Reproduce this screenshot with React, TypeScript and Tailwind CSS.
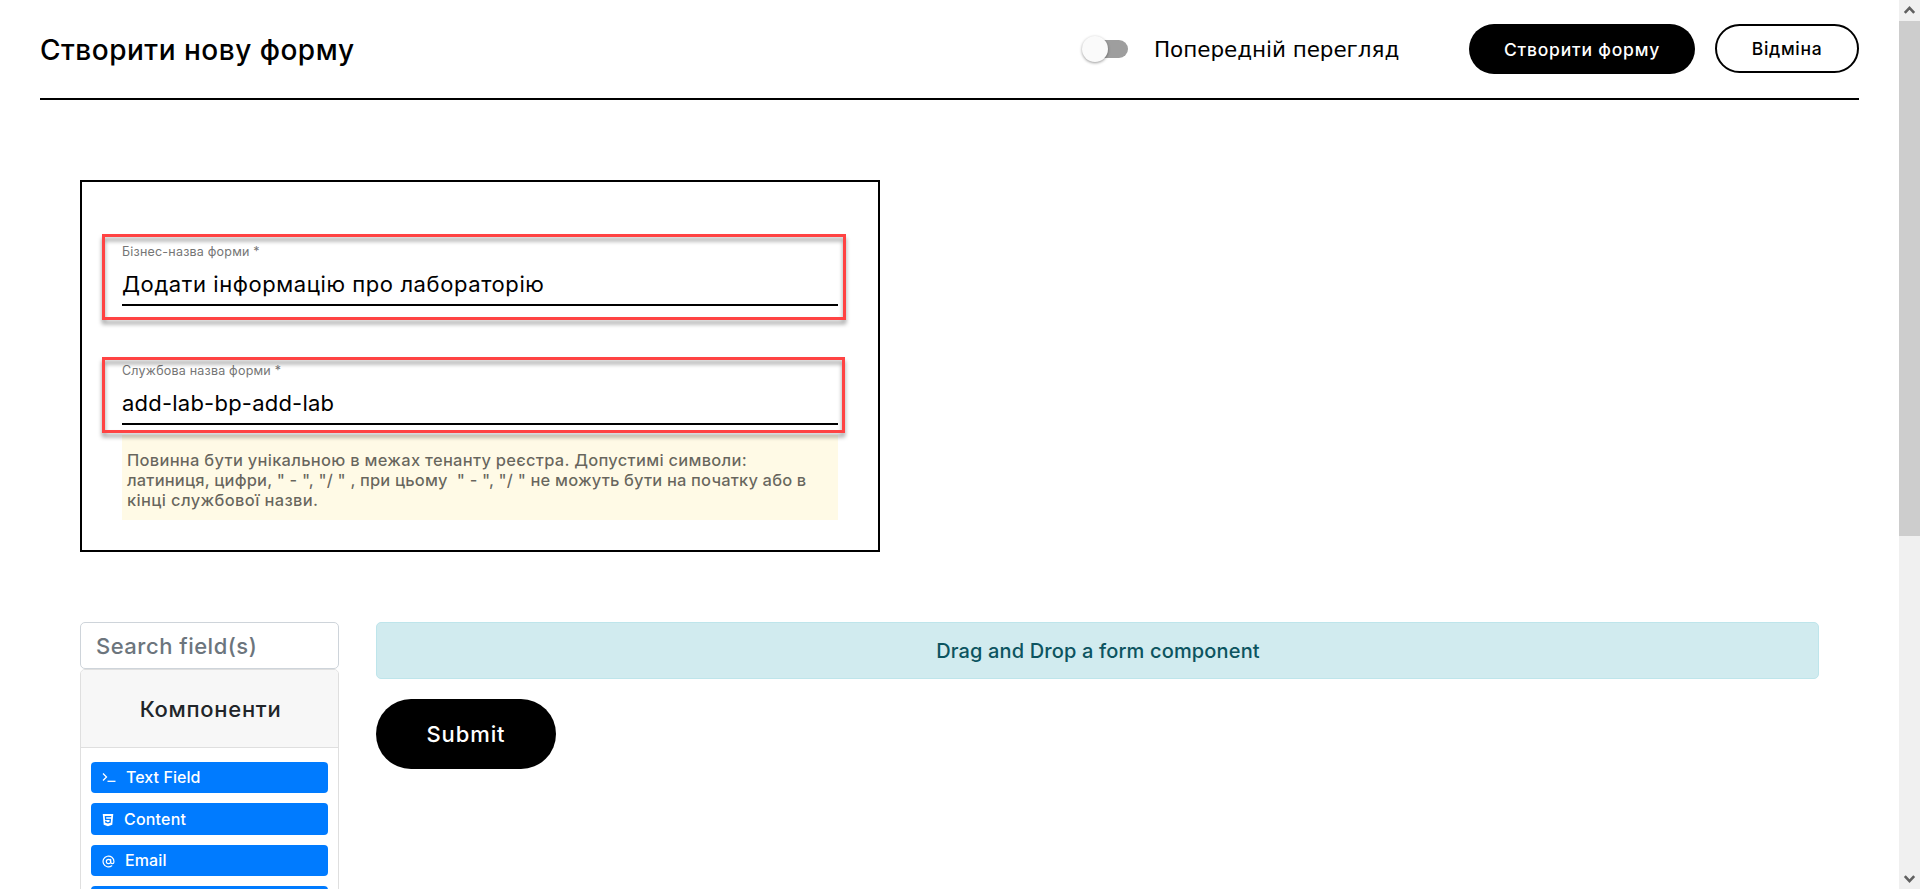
import type { ReactNode } from "react";
import { AtSign } from "lucide-react";
import { FaHtml5 } from "react-icons/fa";

function TerminalIcon() {
  return (
    <svg width="14" height="12" viewBox="0 0 14 12" fill="none" stroke="currentColor" strokeWidth="1.3">
      <path d="M1 2.5 L4.5 6 L1 9.5" />
      <path d="M5.5 10.3 H13.5" />
    </svg>
  );
}

function Field({ label, value }: { label: string; value: ReactNode }) {
  return (
    <div>
      <div className="text-[12.5px] leading-4 tracking-[0.21px] text-[#757575]">{label}</div>
      <div className="mt-2.5 border-b-2 border-black pb-1.5 text-[22px] leading-7">{value}</div>
    </div>
  );
}

function ComponentItem({ className, children }: { className: string; children: ReactNode }) {
  return (
    <div className={`flex shrink-0 items-center rounded-[4px] bg-[#007bff] pb-px pl-[11px] text-base leading-5 font-medium text-white ${className}`}>
      {children}
    </div>
  );
}

function Header() {
  return (
    <header className="mx-10 flex h-[100px] items-center border-b-2 border-black">
      <h1 className="pt-0.5 text-[28px] leading-9 font-[450] tracking-[0.5px]">Створити нову форму</h1>
      <div className="ml-auto flex items-center">
        <div className="relative mr-[26px] h-[18px] w-[44px] rounded-full bg-[#9e9e9e]">
          <div className="absolute -top-[4.5px] -left-[2.5px] size-[26px] rounded-full bg-[#fafafa] shadow-[0_1px_3px_rgba(0,0,0,0.4)]" />
        </div>
        <div className="w-[315px] pt-0.5 font-['DejaVu_Sans',sans-serif] text-[21.5px] leading-7 tracking-[-0.05px] whitespace-nowrap">
          Попередній перегляд
        </div>
        <button className="h-[50px] w-[226px] rounded-full bg-black pt-0.5 text-[17.5px] font-medium tracking-[0.8px] text-white">
          Створити форму
        </button>
        <button className="mb-px ml-5 h-[49px] w-36 rounded-full border-2 border-black pt-0.5 text-[17.5px] font-medium tracking-[0.7px]">
          Відміна
        </button>
      </div>
    </header>
  );
}

function FormNames() {
  return (
    <section className="relative mt-20 ml-20 h-[372px] w-[800px] border-2 border-black px-10 pt-[62px]">
      <Field label="Бізнес-назва форми *" value={<span className="tracking-[0.58px]">Додати інформацію про лабораторію</span>} />
      <div className="h-[57px]" />
      <Field label="Службова назва форми *" value={<span className="tracking-[0.22px]">add-lab-bp-add-lab</span>} />
      <div className="mt-2.5 h-[85px] bg-[#fffae6] pt-[15px] pl-[5px] text-[16.5px] leading-5 font-medium whitespace-pre text-black/60">
        <p className="tracking-[0.27px]">Повинна бути унікальною в межах тенанту реєстра. Допустимі символи:</p>
        <p className="tracking-[0.16px]">{'латиниця, цифри, " - ", "/ " , при цьому  " - ", "/ " не можуть бути на початку або в'}</p>
        <p className="tracking-[0.35px]">кінці службової назви.</p>
      </div>
      <div className="absolute top-[52px] left-5 h-[86px] w-[744px] border-[3px] border-[#ff4343] drop-shadow-[0_4px_2px_rgba(0,0,0,0.4)]" />
      <div className="absolute top-[175px] left-5 h-[76px] w-[743px] border-[3px] border-[#ff4343] drop-shadow-[0_4px_2px_rgba(0,0,0,0.4)]" />
    </section>
  );
}

function Sidebar() {
  return (
    <aside className="flex w-[259px] shrink-0 flex-col">
      <div className="h-[47px] rounded-[5px] border border-[#ced4da] pl-[15px] text-[22px] leading-[46px] font-[450] tracking-[0.5px] text-[#6c757d]">
        Search field(s)
      </div>
      <div className="flex h-[280px] flex-col rounded-t-[5px] border border-[#dfdfdf]">
        <div className="h-[78px] shrink-0 rounded-t-[4px] border-b border-[#dfdfdf] bg-[#f7f7f7] pl-0.5 text-center text-[22px] leading-[79px] font-medium tracking-[0.7px] text-[#212529]">
          Компоненти
        </div>
        <div className="flex flex-col gap-2.5 px-2.5 pt-3.5">
          <ComponentItem className="h-[31px]">
            <TerminalIcon />
            <span className="ml-[10px] tracking-[0.05px]">Text Field</span>
          </ComponentItem>
          <ComponentItem className="h-8">
            <FaHtml5 size={14} className="-mx-px translate-y-px" />
            <span className="ml-[10px] tracking-[0.2px]">Content</span>
          </ComponentItem>
          <ComponentItem className="h-[31px]">
            <AtSign size={13} strokeWidth={2.2} className="translate-y-px" />
            <span className="ml-[10px] tracking-[0.1px]">Email</span>
          </ComponentItem>
          <ComponentItem className="h-[31px]">{null}</ComponentItem>
        </div>
      </div>
    </aside>
  );
}

function Canvas() {
  return (
    <div className="w-[1443px]">
      <div className="h-[57px] rounded-[5px] border border-[#bee5eb] bg-[#d1ebef] pl-px text-center text-[20px] leading-[57px] font-[450] tracking-[0.15px] text-[#0c5460]">
        Drag and Drop a form component
      </div>
      <button className="mt-5 h-[70px] w-[180px] rounded-full bg-black text-[22px] font-medium tracking-[0.9px] text-white">
        Submit
      </button>
    </div>
  );
}

function Scrollbar() {
  return (
    <div className="flex w-[21px] shrink-0 flex-col items-center bg-[#f0f0f0] text-[#606060]">
      <svg className="h-[21px] w-[21px] shrink-0" viewBox="0 0 21 21" fill="none" stroke="currentColor" strokeWidth="2.6">
        <path d="M5.8 12.8 L10.5 7.8 L15.2 12.8" />
      </svg>
      <div className="h-[515px] w-full bg-[#cdcdcd]" />
      <svg className="mt-auto h-[21px] w-[21px] shrink-0" viewBox="0 0 21 21" fill="none" stroke="currentColor" strokeWidth="2.6">
        <path d="M5.8 8.2 L10.5 13.2 L15.2 8.2" />
      </svg>
    </div>
  );
}

export default function App() {
  return (
    <div className="flex h-[889px] w-[1920px] overflow-hidden bg-white font-[Inter,sans-serif] text-black">
      <main className="w-[1899px]">
        <Header />
        <FormNames />
        <div className="mt-[70px] ml-20 flex items-start gap-[37px]">
          <Sidebar />
          <Canvas />
        </div>
      </main>
      <Scrollbar />
    </div>
  );
}
